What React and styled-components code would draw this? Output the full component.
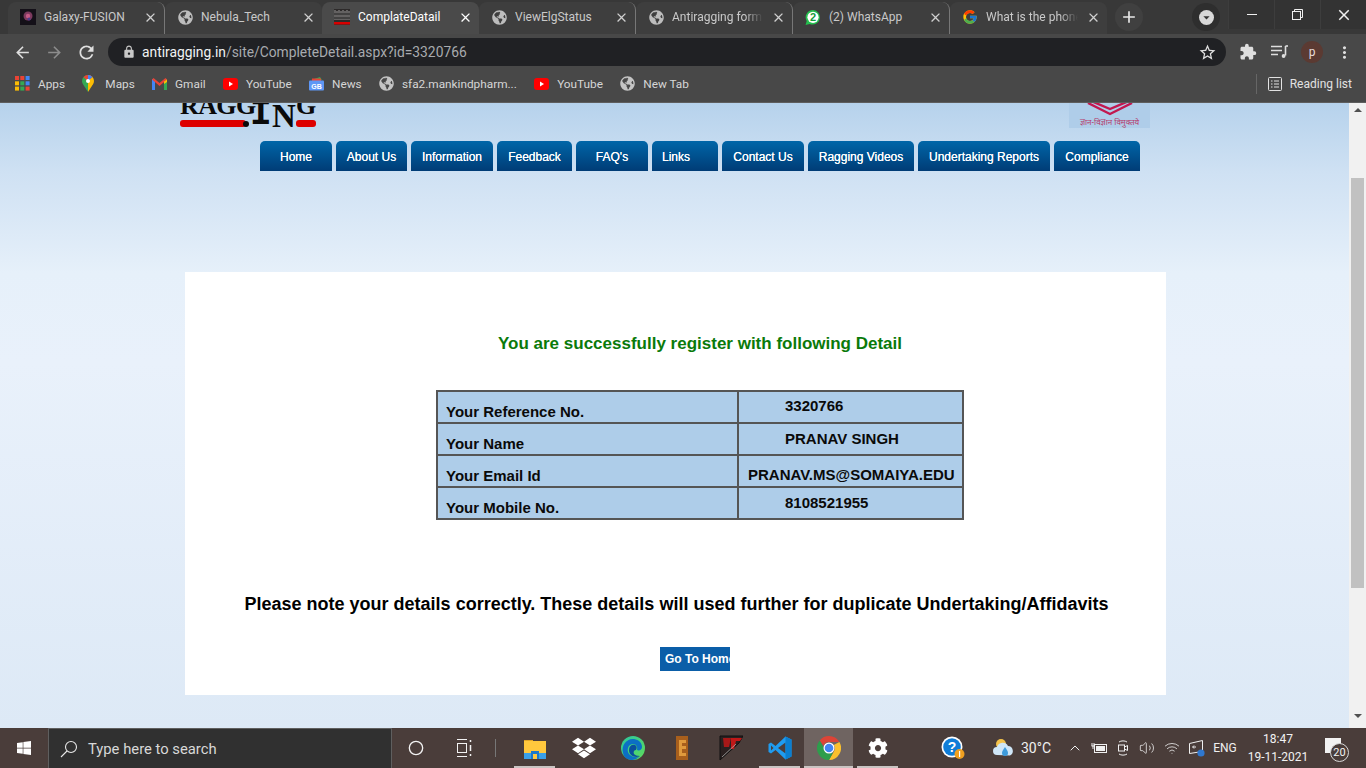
import styled, { createGlobalStyle } from "styled-components";
import {
  MdArrowBack,
  MdArrowForward,
  MdRefresh,
  MdLock,
  MdClose,
  MdAdd,
  MdExtension,
  MdMoreVert,
  MdStarBorder,
  MdArrowDropDown,
} from "react-icons/md";
import { FaGlobeAmericas, FaWindows, FaDropbox, FaCog } from "react-icons/fa";
import { FcGoogle } from "react-icons/fc";
import { Circle, ChevronUp, Volume2, Wifi } from "lucide-react";

const GlobalStyle = createGlobalStyle`
  html, body { margin: 0; padding: 0; overflow: hidden; }
  * { box-sizing: border-box; }
  body { font-family: "Liberation Sans", Arial, sans-serif; }
`;

const Screen = styled.div`
  width: 1366px;
  height: 768px;
  display: flex;
  flex-direction: column;
  overflow: hidden;
`;

/* browser chrome */
const TabStrip = styled.div`
  height: 34px;
  flex: none;
  background: #383838;
  display: flex;
  align-items: flex-end;
  padding-left: 8px;
  font-family: Roboto, "Noto Sans", sans-serif;
  font-size: 12px;
`;

const Tab = styled.div`
  width: 157px;
  height: 32px;
  flex: none;
  display: flex;
  align-items: center;
  padding: 0 6px 2px 12px;
  gap: 8px;
  color: ${(p) => (p.$active ? "#ffffff" : "#c9c9c9")};
  background: ${(p) => (p.$active ? "#4a4a4a" : "#3e3e3e")};
  border-radius: 8px 8px 0 0;
  border-right: ${(p) => (p.$divider ? "1px solid #777" : "none")};
  background-clip: padding-box;
`;

const TabTitle = styled.span`
  flex: 1;
  min-width: 0;
  white-space: nowrap;
  overflow: hidden;
  -webkit-mask-image: ${(p) => (p.$fade ? "linear-gradient(90deg,#000 80%,transparent)" : "none")};
`;

const TabIcon = styled.span`
  width: 16px;
  height: 16px;
  flex: none;
  display: flex;
  align-items: center;
  justify-content: center;
  color: #bdbdbd;
`;

const NewTab = styled.span`
  width: 28px;
  height: 28px;
  margin: 0 0 3px 8px;
  border-radius: 50%;
  background: #404040;
  color: #e8e8e8;
  display: flex;
  align-items: center;
  justify-content: center;
`;

const StripSpacer = styled.div`
  flex: 1;
`;

const TabSearch = styled.span`
  width: 28px;
  height: 28px;
  margin: 0 8px 3px 0;
  border-radius: 50%;
  background: #2e2e2e;
  display: flex;
  align-items: center;
  justify-content: center;
`;

const TabSearchDisc = styled.span`
  width: 15px;
  height: 15px;
  border-radius: 50%;
  background: #d8d8d8;
  color: #333;
  display: flex;
  align-items: center;
  justify-content: center;
`;

const WindowControls = styled.div`
  align-self: flex-start;
  display: flex;
  height: 29px;
  background: #333;
`;

const WindowButton = styled.span`
  width: 46px;
  height: 29px;
  display: flex;
  align-items: center;
  justify-content: center;
  color: #f0f0f0;
  border-left: 1px solid #3d3d3d;
`;

const MinimizeBar = styled.span`
  width: 10px;
  height: 1px;
  background: #f0f0f0;
`;

const Toolbar = styled.div`
  height: 36px;
  flex: none;
  background: #484848;
  display: flex;
  align-items: center;
  padding: 0 8px 0 6px;
  color: #dcdcdc;
`;

const ToolButton = styled.span`
  width: 32px;
  height: 28px;
  flex: none;
  display: flex;
  align-items: center;
  justify-content: center;
  color: ${(p) => (p.$muted ? "#8c8c8c" : "#dfdfdf")};
`;

const AddressBar = styled.div`
  width: 1118px;
  height: 28px;
  margin: 0 6px 0 6px;
  flex: none;
  border-radius: 14px;
  background: #202124;
  display: flex;
  align-items: center;
  padding: 0 9px 0 14px;
  gap: 6px;
  font-family: Roboto, "Noto Sans", sans-serif;
  font-size: 13.83px;
  color: #a8abaf;
`;

const Url = styled.span`
  flex: 1;
  & b {
    font-weight: 400;
    color: #f1f3f4;
  }
`;

const Avatar = styled.span`
  width: 22px;
  height: 22px;
  margin: 0 5px;
  flex: none;
  border-radius: 50%;
  background: #5b3a32;
  color: #e8dcd8;
  font-family: Roboto, sans-serif;
  font-size: 12px;
  display: flex;
  align-items: center;
  justify-content: center;
`;

const BookmarkBar = styled.div`
  height: 33px;
  flex: none;
  background: #484848;
  border-bottom: 1px solid #5e5e5e;
  display: flex;
  align-items: center;
  padding: 0 14px 5px 15px;
  gap: 17.3px;
  font-family: Roboto, "Noto Sans", sans-serif;
  font-size: 11.8px;
  color: #d6d6d6;
`;

const Bookmark = styled.span`
  display: flex;
  align-items: center;
  gap: 8px;
  white-space: nowrap;
`;

const BookmarkIcon = styled.span`
  width: 15px;
  height: 16px;
  flex: none;
  display: flex;
  align-items: center;
  color: #c4c4c4;
`;

const ReadingList = styled.span`
  margin-left: auto;
  height: 20px;
  padding-left: 11px;
  border-left: 1px solid #666;
  display: flex;
  align-items: center;
  gap: 8px;
  white-space: nowrap;
  font-size: 12px;
  color: #e2e2e2;
`;

/* page viewport */
const Viewport = styled.div`
  flex: 1;
  min-height: 0;
  display: flex;
`;

const Page = styled.div`
  flex: 1;
  min-width: 0;
  overflow: hidden;
  background: linear-gradient(180deg, #b6d2ec 0, #cfe1f3 70px, #e6f0fa 170px, #e9f1fb 260px, #dde9f6 625px);
`;

const Masthead = styled.header`
  height: 38px;
  width: 970px;
  margin-left: 180px;
  display: flex;
  justify-content: space-between;
  align-items: flex-start;
`;

const Logo = styled.div`
  position: relative;
  width: 136px;
  height: 25px;
  overflow: hidden;
  display: flex;
  align-items: flex-end;
  font-weight: 700;
  color: #0a0a0a;
`;

const LogoLetters = styled.span`
  font-family: ${(p) => (p.$mono ? '"Liberation Mono", monospace' : '"Liberation Serif", serif')};
  font-size: ${(p) => p.$size}px;
  line-height: 1;
  letter-spacing: ${(p) => p.$spacing || 0}px;
  margin-bottom: ${(p) => p.$drop}px;
  width: ${(p) => p.$w}px;
  flex: none;
  white-space: nowrap;
`;

const LogoBar = styled.span`
  position: absolute;
  left: ${(p) => p.$left}px;
  width: ${(p) => p.$w}px;
  bottom: 1px;
  height: 7px;
  border-radius: 3px;
  background: #dd0000;
`;

const LogoDot = styled.span`
  position: absolute;
  left: 63px;
  bottom: 1px;
  width: 6px;
  height: 6px;
  border-radius: 50%;
  background: #0a0a0a;
`;

const Emblem = styled.div`
  width: 81px;
  height: 25px;
  background: #afcde9;
  display: flex;
  flex-direction: column;
  align-items: center;
  overflow: hidden;
`;

const Motto = styled.span`
  font-family: "Noto Sans", "Liberation Sans", sans-serif;
  font-size: 8px;
  line-height: 10px;
  margin-top: 1px;
  color: #b53a6c;
  white-space: nowrap;
`;

const Nav = styled.nav`
  margin-left: 260px;
  height: 30px;
  display: flex;
  gap: 4px;
`;

const NavItem = styled.a`
  width: ${(p) => p.$w}px;
  flex: none;
  display: flex;
  align-items: center;
  justify-content: center;
  padding: 2px ${(p) => p.$pr || 0}px 0 0;
  border-radius: 5px 5px 0 0;
  background: linear-gradient(180deg, #0066a8 0, #003c76 100%);
  color: #ffffff;
  font-size: 12px;
  text-shadow: 0 0 0.6px #fff;
  white-space: nowrap;
`;

const Card = styled.main`
  margin: 101px 0 0 185px;
  width: 981px;
  height: 423px;
  background: #ffffff;
  display: flex;
  flex-direction: column;
  align-items: center;
  padding-top: 62px;
`;

const Heading = styled.h2`
  margin: 0 0 0 49px;
  font-size: 17px;
  line-height: 20px;
  font-weight: 700;
  color: #0a7a0a;
`;

const DetailTable = styled.table`
  margin: 36px 0 0 49px;
  width: 528px;
  height: 130px;
  border-collapse: collapse;
  border: 2px solid #555;
  background: #aecde9;
  font-size: 15px;
  font-weight: 700;
  color: #0a0a0a;
  table-layout: fixed;
`;

const Row = styled.tr`
  height: 32px;
`;

const Label = styled.td`
  width: 301px;
  padding: 12px 0 0 8px;
  border: 2px solid #555;
  line-height: 16px;
  vertical-align: top;
`;

const Value = styled.td`
  padding: ${(p) => p.$top}px 0 0 ${(p) => p.$inset}px;
  border: 2px solid #555;
  line-height: 16px;
  vertical-align: top;
  white-space: nowrap;
`;

const Note = styled.p`
  margin: 74px 0 0 2px;
  font-size: 18px;
  line-height: 21px;
  font-weight: 700;
  color: #000;
  white-space: nowrap;
`;

const GoHome = styled.button`
  margin: 32px 0 0 39px;
  width: 70px;
  height: 24px;
  padding: 0 0 0 5px;
  border: none;
  background: #0b5ea8;
  color: #fff;
  font-family: "Liberation Sans", sans-serif;
  font-size: 12px;
  font-weight: 700;
  text-align: left;
  white-space: nowrap;
  overflow: hidden;
`;

const Scrollbar = styled.div`
  width: 17px;
  flex: none;
  background: #f1f1f1;
  display: flex;
  flex-direction: column;
  align-items: center;
  padding-top: 5px;
`;

const ScrollArrow = styled.span`
  width: 0;
  height: 0;
  border-left: 4px solid transparent;
  border-right: 4px solid transparent;
  border-${(p) => (p.$down ? "top" : "bottom")}: 4px solid #505050;
`;

const ScrollThumb = styled.span`
  width: 13px;
  height: 410px;
  margin: 66px 0 126px;
  background: #c1c1c1;
`;

/* windows taskbar */
const Taskbar = styled.footer`
  height: 40px;
  flex: none;
  background: #4a3d3a;
  display: flex;
  align-items: center;
  color: #f2f2f2;
  font-family: Roboto, "Noto Sans", sans-serif;
`;

const StartButton = styled.span`
  width: 48px;
  height: 40px;
  flex: none;
  display: flex;
  align-items: center;
  justify-content: center;
  color: #fff;
`;

const SearchBox = styled.div`
  width: 344px;
  height: 40px;
  flex: none;
  background: #303030;
  border: 1px solid #5f5f5f;
  border-bottom: none;
  display: flex;
  align-items: center;
  padding-left: 11px;
  gap: 10px;
  font-size: 14.8px;
  color: #d8d8d8;
`;

const SystemButton = styled.span`
  width: 48px;
  height: 40px;
  flex: none;
  display: flex;
  align-items: center;
  justify-content: center;
`;

const TaskDivider = styled.span`
  width: 1px;
  height: 18px;
  margin: 0 14px 0 7px;
  background: #777;
  flex: none;
`;

const AppTile = styled.span`
  position: relative;
  width: 49px;
  height: 40px;
  flex: none;
  display: flex;
  align-items: center;
  justify-content: center;
  background: ${(p) => (p.$active ? "#6f6461" : "transparent")};
  &::after {
    content: "";
    display: ${(p) => (p.$open ? "block" : "none")};
    position: absolute;
    left: ${(p) => (p.$active ? 0 : 4)}px;
    right: ${(p) => (p.$active ? 0 : 4)}px;
    bottom: 0;
    height: 2px;
    background: #c9c4c2;
  }
`;

const Tray = styled.div`
  margin-left: 38px;
  display: flex;
  align-items: center;
  flex: 1;
`;

const TraySlot = styled.span`
  width: ${(p) => p.$w || 24}px;
  height: 40px;
  flex: none;
  margin-left: ${(p) => p.$ml || 0}px;
  display: flex;
  align-items: center;
  justify-content: center;
  font-size: ${(p) => p.$size || 13}px;
  color: #f0f0f0;
  white-space: nowrap;
`;

const Clock = styled.span`
  width: 68px;
  margin-left: 2px;
  flex: none;
  text-align: center;
  font-size: 12px;
  line-height: 18px;
`;

const Bell = styled.span`
  position: relative;
  margin: -6px 0 0 13px;
  width: 16px;
  height: 15px;
  background: #f2f2f2;
`;

const BellBadge = styled.span`
  position: absolute;
  left: 5px;
  top: 5px;
  width: 19px;
  height: 19px;
  border-radius: 50%;
  background: #4a3d3a;
  border: 1px solid #d8d8d8;
  font-size: 11px;
  display: flex;
  align-items: center;
  justify-content: center;
`;

const GlobeFav = () => <FaGlobeAmericas size={15} />;

const NebulaFav = () => (
  <svg width="16" height="16" viewBox="0 0 16 16">
    <rect width="16" height="16" fill="#141018" />
    <circle cx="8" cy="7" r="4.5" fill="#7c3a5e" />
    <circle cx="8" cy="7" r="2.2" fill="#c65a86" />
    <circle cx="9" cy="10" r="1.5" fill="#4c3c8c" />
  </svg>
);

const DetailFav = () => (
  <svg width="16" height="16" viewBox="0 0 16 16">
    <rect width="16" height="16" fill="#2d2a2a" />
    <path d="M1 1v10M3 2v9M5 1v10M7 2v9M9 1v10M11 2v9M13 1v10M15 2v9" stroke="#c8c8c8" strokeWidth="0.7" />
    <path d="M0 5h16M0 9h16" stroke="#111" strokeWidth="0.8" />
    <rect y="13" width="16" height="2.5" fill="#d80000" />
  </svg>
);

const WhatsAppFav = () => (
  <svg width="17" height="17" viewBox="0 0 16 16">
    <path d="M8 .5a7.3 7.3 0 0 0-6.3 11L.6 15.500l4.100-1A7.3 7.3 0 1 0 8 .5z" fill="#25c04f" />
    <circle cx="8" cy="7.800" r="5.600" fill="#fff" />
    <text x="8" y="11.600" textAnchor="middle" fontSize="11" fontWeight="700" fontFamily="Liberation Sans" fill="#129c3a">
      2
    </text>
  </svg>
);

const AppsIcon = () => (
  <svg width="15" height="15" viewBox="0 0 15 15">
    {["#ea4335", "#ea4335", "#4285f4", "#fbbc04", "#34a853", "#4285f4", "#fbbc04", "#34a853", "#ea4335"].map((c, i) => (
      <rect key={i} x={(i % 3) * 5.3} y={Math.floor(i / 3) * 5.3} width="4" height="4" fill={c} />
    ))}
  </svg>
);

const MapsIcon = () => (
  <svg width="12" height="17" viewBox="0 0 12 17">
    <path d="M6 0a6 6 0 0 0-6 6c0 1.2.4 2.2 1 3.2L6 17z" fill="#34a853" />
    <path d="M6 0a6 6 0 0 1 6 6c0 1.2-.4 2.2-1 3.2L6 17z" fill="#fbbc04" />
    <path d="M1.5 2.2 6 6l4.4-3.9A6 6 0 0 0 6 0a6 6 0 0 0-4.5 2.2z" fill="#ea4335" />
    <path d="M10.4 2.1 6 6V0a6 6 0 0 1 4.4 2.1z" fill="#4285f4" />
    <circle cx="6" cy="6" r="2" fill="#fff" />
  </svg>
);

const GmailIcon = () => (
  <svg width="15" height="12" viewBox="0 0 15 12">
    <rect x="0" y="1" width="3" height="11" fill="#4285f4" />
    <rect x="12" y="1" width="3" height="11" fill="#34a853" />
    <path d="M0 1.5 1.5 0 7.5 5 13.5 0 15 1.5 7.5 8z" fill="#ea4335" />
    <path d="M12 3.5 15 1.5V4l-3 2z" fill="#fbbc04" />
  </svg>
);

const YouTubeIcon = () => (
  <svg width="15" height="12" viewBox="0 0 15 12">
    <rect width="15" height="12" rx="3" fill="#f00" />
    <path d="M6 3.5v5L10 6z" fill="#fff" />
  </svg>
);

const NewsIcon = () => (
  <svg width="15" height="14" viewBox="0 0 15 14">
    <path d="M2 3 11 0l2 3z" fill="#34a853" />
    <path d="M3 1.5h9V4H3z" fill="#ea4335" />
    <rect x="0" y="3.5" width="15" height="10" rx="1" fill="#5e97f6" />
    <text x="7.5" y="11.5" textAnchor="middle" fontSize="7" fontFamily="Liberation Sans" fontWeight="700" fill="#fff">
      GB
    </text>
  </svg>
);

const QueueIcon = () => (
  <svg width="18" height="14" viewBox="0 0 18 14" fill="none" stroke="#dedede" strokeWidth="1.6">
    <path d="M0 1.5h11M0 5.5h11M0 9.5h7" />
    <path d="M14.5 1v9.5" />
    <path d="M14.5 1H17" />
    <circle cx="12.6" cy="11" r="1.9" fill="#dedede" stroke="none" />
  </svg>
);

const ReadingIcon = () => (
  <svg width="14" height="14" viewBox="0 0 14 14" fill="none" stroke="#e2e2e2">
    <rect x=".5" y=".5" width="13" height="13" rx="1" />
    <path d="M3 4h1.5M6 4h5M3 7h1.5M6 7h5M3 10h1.5M6 10h5" />
  </svg>
);

const RestoreIcon = () => (
  <svg width="11" height="11" viewBox="0 0 11 11" fill="none" stroke="#f0f0f0">
    <rect x=".5" y="2.5" width="8" height="8" />
    <path d="M2.5 2.5v-2h8v8h-2" />
  </svg>
);

const SearchGlass = () => (
  <svg width="18" height="18" viewBox="0 0 18 18" fill="none" stroke="#e8e8e8" strokeWidth="1.1">
    <circle cx="11" cy="7" r="5.5" />
    <path d="M7 11 1 17" />
  </svg>
);

const TaskViewIcon = () => (
  <svg width="16" height="18" viewBox="0 0 16 18" fill="none" stroke="#f2f2f2">
    <path d="M1 .5h10M1 17.5h10" />
    <rect x="1.5" y="4.5" width="9" height="9" />
    <path d="M14.5 1v2M14.5 6v6M14.5 15v2" strokeWidth="1.5" />
  </svg>
);

const ExplorerIcon = () => (
  <svg width="22" height="21" viewBox="0 0 22 21">
    <path d="M0 2h9v3H0z" fill="#e0a526" />
    <rect y="3" width="22" height="16" fill="#ffc83d" />
    <rect y="15" width="22" height="6" fill="#3aa0e8" />
    <rect x="7" y="13" width="8" height="8" fill="#1c78c8" />
    <rect x="9" y="16" width="4" height="5" fill="#ffc83d" />
  </svg>
);

const EdgeIcon = () => (
  <svg width="24" height="24" viewBox="0 0 24 24">
    <defs>
      <linearGradient id="edgeA" x1="0" y1="0" x2="1" y2="1">
        <stop offset="0" stopColor="#2bc6a0" />
        <stop offset="1" stopColor="#5fdc5a" />
      </linearGradient>
    </defs>
    <circle cx="12" cy="12" r="12" fill="url(#edgeA)" />
    <path d="M2 17C0 9 6 2 13 3c5 .7 8 4 8 8 0 3-3 4-5 3 1-3-1-6-4-6-4 0-6 4-5 8 1 3 5 6 11 5-2 2-5 3-7 3-4 0-8-2-9-7z" fill="#0c6fc4" />
    <path d="M8 14c0-4 3-6 6-5 2 1 2 3 1 5-2 0-3 2-2 4 1 1 3 2 6 2-3 2-11 1-11-6z" fill="#0a4f9c" />
  </svg>
);

const ExtraIcon = () => (
  <svg width="12" height="24" viewBox="0 0 12 24">
    <rect width="12" height="24" fill="#a85f1c" />
    <path d="M3 4h7v3H6v3h4v3H6v4h4v3H3z" fill="#e09a3c" />
  </svg>
);

const TurboIcon = () => (
  <svg width="24" height="26" viewBox="0 0 24 26">
    <path d="M1 1 1 25 20 8 24 1z" fill="#2a2020" stroke="#111" />
    <path d="M4 3 12 3 10 12 5 12z" fill="#a81818" />
    <path d="M12 3h11l-2 3h-4l-2 8h-3z" fill="#c01818" />
    <path d="M3 22 17 9" stroke="#bbb" strokeWidth="0.7" />
  </svg>
);

const VsCodeIcon = () => (
  <svg width="24" height="24" viewBox="0 0 24 24">
    <path d="M17.5 0.500 23.500 3.500v17l-6 3-10-9.500-4.500 3.500L0.500 16V8l2.500-1.500L7.500 10z" fill="#1f9cf0" />
    <path d="M17.500 6.500v11L10 12z" fill="#4a3d3a" />
    <path d="M17.500 0.500 23.500 3.500v17l-6 3z" fill="#0a7fd0" />
    <path d="M3 9.500 5.500 12 3 14.500z" fill="#4a3d3a" />
  </svg>
);

const ChromeIcon = () => (
  <svg width="24" height="24" viewBox="0 0 24 24">
    <path d="M12 0a12 12 0 0 1 10.4 6H12a6 6 0 0 0-5.6 3.8L2.7 4.4A12 12 0 0 1 12 0z" fill="#db4437" />
    <path d="M22.4 6A12 12 0 0 1 12 24l4.9-8.6A6 6 0 0 0 16.8 9z" fill="#fbc02d" />
    <path d="M12 24A12 12 0 0 1 2.7 4.4l4.6 8.4A6 6 0 0 0 16 16.5L12 24z" fill="#2e9d4c" />
    <circle cx="12" cy="12" r="5.5" fill="#fff" />
    <circle cx="12" cy="12" r="4.3" fill="#4285f4" />
  </svg>
);

const HelpIcon = () => (
  <svg width="24" height="24" viewBox="0 0 24 24">
    <circle cx="11" cy="11" r="10.5" fill="#fff" />
    <circle cx="11" cy="11" r="8.8" fill="#0f7dd8" />
    <text x="11" y="16" textAnchor="middle" fontSize="14" fontWeight="700" fontFamily="Liberation Sans" fill="#fff">
      ?
    </text>
    <circle cx="18.5" cy="18" r="5" fill="#f0a020" />
    <rect x="18" y="15" width="1.2" height="6" fill="#fff" />
  </svg>
);

const WeatherIcon = () => (
  <svg width="22" height="20" viewBox="0 0 22 20">
    <circle cx="8" cy="6" r="5" fill="#f4c24a" />
    <path d="M4 17a4 4 0 0 1 0-8 6 6 0 0 1 11-1 5 5 0 0 1 2 9.5z" fill="#cfe6f7" />
    <path d="M12 9c2 3 3 4 3 6a3 3 0 0 1-6 0c0-2 1-3 3-6z" fill="#3d9bdc" />
  </svg>
);

const BatteryIcon = () => (
  <svg width="16" height="12" viewBox="0 0 16 12" fill="none" stroke="#f0f0f0">
    <rect x="3.5" y="2.5" width="12" height="8" />
    <rect x="5" y="4" width="9" height="5" fill="#f0f0f0" stroke="none" />
    <path d="M1 1v3M3 1v3M.5 4h3M2 4v3" />
  </svg>
);

const CameraIcon = () => (
  <svg width="12" height="18" viewBox="0 0 12 18" fill="none" stroke="#f0f0f0">
    <path d="M2 3c2-1.500 6-1.500 8 0M2 15c2 1.500 6 1.500 8 0" />
    <rect x="1.500" y="6" width="6" height="6" />
    <path d="M7.500 8l3-1.500v5l-3-1.500" />
  </svg>
);

const DisplayIcon = () => (
  <svg width="18" height="18" viewBox="0 0 18 18" fill="none" stroke="#f0f0f0">
    <path d="M1.500 4.500 14.500 1.500v11l-13 2z" />
    <path d="M5 8h3M6 6.500 4.500 8 6 9.500" />
    <circle cx="13" cy="14" r="3.600" fill="#2f78d0" stroke="none" />
  </svg>
);

const tabs = [
  { title: "Galaxy-FUSION", icon: <NebulaFav />, divider: true },
  { title: "Nebula_Tech", icon: <GlobeFav /> },
  { title: "ComplateDatail", icon: <DetailFav />, active: true },
  { title: "ViewElgStatus", icon: <GlobeFav />, divider: true },
  { title: "Antiragging form submission", icon: <GlobeFav />, divider: true, fade: true },
  { title: "(2) WhatsApp", icon: <WhatsAppFav />, divider: true },
  { title: "What is the phone number", icon: <FcGoogle size={16} />, fade: true },
];

const bookmarks = [
  { label: "Apps", icon: <AppsIcon /> },
  { label: "Maps", icon: <MapsIcon /> },
  { label: "Gmail", icon: <GmailIcon /> },
  { label: "YouTube", icon: <YouTubeIcon /> },
  { label: "News", icon: <NewsIcon /> },
  { label: "sfa2.mankindpharm...", icon: <FaGlobeAmericas size={15} /> },
  { label: "YouTube", icon: <YouTubeIcon /> },
  { label: "New Tab", icon: <FaGlobeAmericas size={15} /> },
];

const navItems = [
  ["Home", 72],
  ["About Us", 71],
  ["Information", 82],
  ["Feedback", 75],
  ["FAQ's", 72],
  ["Links", 66, 18],
  ["Contact Us", 82],
  ["Ragging Videos", 106],
  ["Undertaking Reports", 132],
  ["Compliance", 86],
];

const details = [
  ["Your Reference No.", "3320766", 46, 6],
  ["Your Name", "PRANAV SINGH", 46, 7],
  ["Your Email Id", "PRANAV.MS@SOMAIYA.EDU", 9, 11],
  ["Your Mobile No.", "8108521955", 46, 7],
];

export default function App() {
  return (
    <Screen>
      <GlobalStyle />
      <TabStrip>
        {tabs.map((t) => (
          <Tab key={t.title} $active={t.active} $divider={t.divider}>
            <TabIcon>{t.icon}</TabIcon>
            <TabTitle $fade={t.fade}>{t.title}</TabTitle>
            <MdClose size={15} color={t.active ? "#fff" : "#d0d0d0"} />
          </Tab>
        ))}
        <NewTab>
          <MdAdd size={20} />
        </NewTab>
        <StripSpacer />
        <TabSearch>
          <TabSearchDisc>
            <MdArrowDropDown size={17} />
          </TabSearchDisc>
        </TabSearch>
        <WindowControls>
          <WindowButton>
            <MinimizeBar />
          </WindowButton>
          <WindowButton>
            <RestoreIcon />
          </WindowButton>
          <WindowButton>
            <MdClose size={18} />
          </WindowButton>
        </WindowControls>
      </TabStrip>

      <Toolbar>
        <ToolButton>
          <MdArrowBack size={19} />
        </ToolButton>
        <ToolButton $muted>
          <MdArrowForward size={19} />
        </ToolButton>
        <ToolButton>
          <MdRefresh size={21} />
        </ToolButton>
        <AddressBar>
          <MdLock size={14} color="#c8c8c8" />
          <Url>
            <b>antiragging.in</b>/site/CompleteDetail.aspx?id=3320766
          </Url>
          <MdStarBorder size={19} color="#e0e0e0" />
        </AddressBar>
        <ToolButton>
          <MdExtension size={18} />
        </ToolButton>
        <ToolButton>
          <QueueIcon />
        </ToolButton>
        <Avatar>p</Avatar>
        <ToolButton>
          <MdMoreVert size={19} />
        </ToolButton>
      </Toolbar>

      <BookmarkBar>
        {bookmarks.map((b, i) => (
          <Bookmark key={i}>
            <BookmarkIcon>{b.icon}</BookmarkIcon>
            {b.label}
          </Bookmark>
        ))}
        <ReadingList>
          <ReadingIcon />
          Reading list
        </ReadingList>
      </BookmarkBar>

      <Viewport>
        <Page>
          <Masthead>
            <Logo>
              <LogoLetters $size={26} $w={70} $drop={9} $spacing={-0.6}>
                RAGG
              </LogoLetters>
              <LogoLetters $mono $size={36} $w={22} $drop={-5}>
                I
              </LogoLetters>
              <LogoLetters $size={33} $w={24} $drop={-5}>
                N
              </LogoLetters>
              <LogoLetters $size={26} $w={20} $drop={9}>
                G
              </LogoLetters>
              <LogoBar $left={0} $w={66} />
              <LogoDot />
              <LogoBar $left={116} $w={20} />
            </Logo>
            <Emblem>
              <svg width="54" height="13" viewBox="0 0 54 13" fill="none" stroke="#c2174f" strokeWidth="2.400">
                <path d="M1 -5 27 6 53 -5" />
                <path d="M5 0 27 11 49 0" />
              </svg>
              <Motto>ज्ञान-विज्ञान विमुक्तये</Motto>
            </Emblem>
          </Masthead>

          <Nav>
            {navItems.map(([label, w, pr]) => (
              <NavItem key={label} $w={w} $pr={pr}>
                {label}
              </NavItem>
            ))}
          </Nav>

          <Card>
            <Heading>You are successfully register with following Detail</Heading>
            <DetailTable>
              <tbody>
                {details.map(([label, value, inset, top]) => (
                  <Row key={label}>
                    <Label>{label}</Label>
                    <Value $inset={inset} $top={top}>
                      {value}
                    </Value>
                  </Row>
                ))}
              </tbody>
            </DetailTable>
            <Note>Please note your details correctly. These details will used further for duplicate Undertaking/Affidavits</Note>
            <GoHome>Go To Home</GoHome>
          </Card>
        </Page>
        <Scrollbar>
          <ScrollArrow />
          <ScrollThumb />
          <ScrollArrow $down />
        </Scrollbar>
      </Viewport>

      <Taskbar>
        <StartButton>
          <FaWindows size={16} />
        </StartButton>
        <SearchBox>
          <SearchGlass />
          Type here to search
        </SearchBox>
        <SystemButton>
          <Circle size={16} strokeWidth={2} />
        </SystemButton>
        <SystemButton>
          <TaskViewIcon />
        </SystemButton>
        <TaskDivider />
        <AppTile $open>
          <ExplorerIcon />
        </AppTile>
        <AppTile>
          <FaDropbox size={24} color="#fff" />
        </AppTile>
        <AppTile>
          <EdgeIcon />
        </AppTile>
        <AppTile>
          <ExtraIcon />
        </AppTile>
        <AppTile>
          <TurboIcon />
        </AppTile>
        <AppTile $open>
          <VsCodeIcon />
        </AppTile>
        <AppTile $open $active>
          <ChromeIcon />
        </AppTile>
        <AppTile $open>
          <FaCog size={20} color="#fff" />
        </AppTile>
        <Tray>
          <TraySlot $w={26}>
            <HelpIcon />
          </TraySlot>
          <TraySlot $w={50} $ml={13}>
            <WeatherIcon />
          </TraySlot>
          <TraySlot $w={46} $size={14} $ml={-16}>
            30°C
          </TraySlot>
          <TraySlot $w={24} $ml={4}>
            <ChevronUp size={16} strokeWidth={1.5} />
          </TraySlot>
          <TraySlot $w={24}>
            <BatteryIcon />
          </TraySlot>
          <TraySlot $w={24}>
            <CameraIcon />
          </TraySlot>
          <TraySlot $w={24}>
            <Volume2 size={16} strokeWidth={1.2} />
          </TraySlot>
          <TraySlot $w={26}>
            <Wifi size={16} strokeWidth={1.2} />
          </TraySlot>
          <TraySlot $w={24}>
            <DisplayIcon />
          </TraySlot>
          <TraySlot $w={34} $size={12} $ml={-1}>
            ENG
          </TraySlot>
          <Clock>
            18:47
            <br />
            19-11-2021
          </Clock>
          <Bell>
            <BellBadge>20</BellBadge>
          </Bell>
        </Tray>
      </Taskbar>
    </Screen>
  );
}
